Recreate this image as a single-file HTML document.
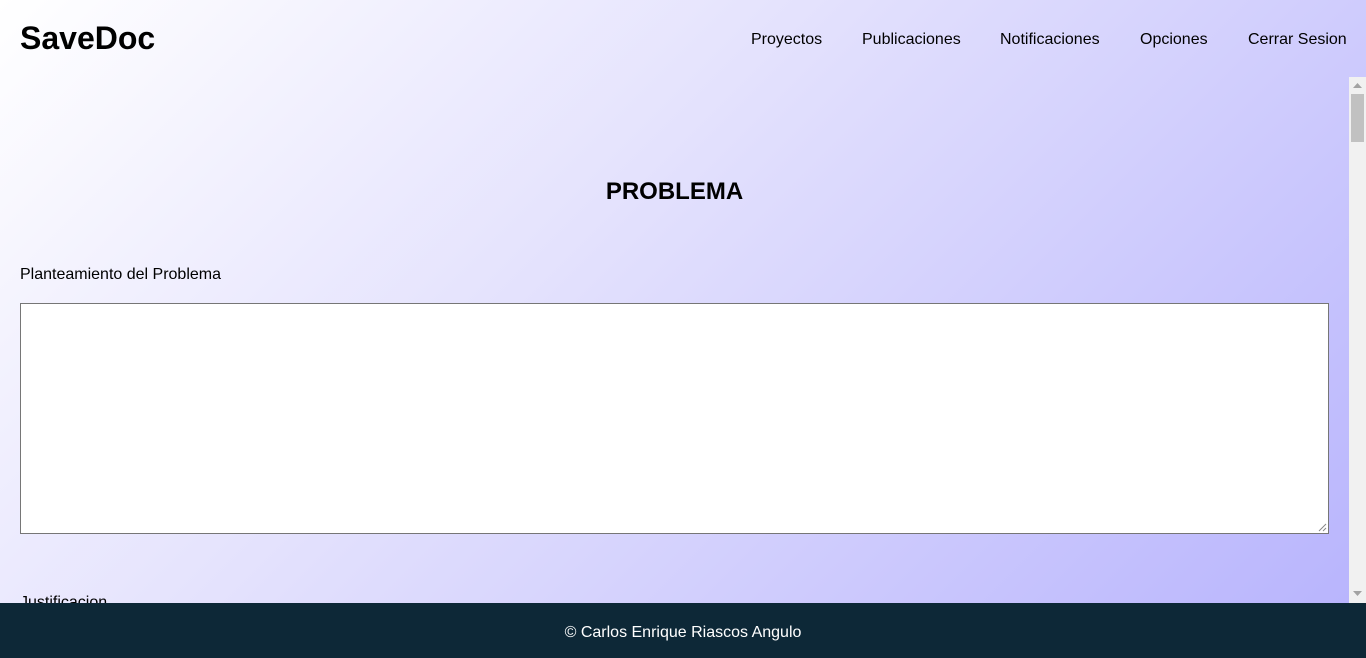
<!DOCTYPE html>
<html><head><meta charset="utf-8"><style>
*{margin:0;padding:0;box-sizing:border-box}
html,body{width:1366px;height:658px;overflow:hidden}
body{font-family:"Liberation Sans",Arial,sans-serif;background:linear-gradient(135deg,#ffffff 0%,#e4e2fd 40%,#b6b2fd 100%);position:relative;color:#000}
.logo{position:absolute;left:20px;top:20px;font-size:32px;font-weight:bold}
.nav{position:absolute;top:31px;font-size:16px}
h2{position:absolute;left:0;width:1349px;text-align:center;top:178px;font-size:24px;font-weight:bold}
.lbl{position:absolute;left:20px;font-size:16px}
.ta{position:absolute;left:20px;top:303px;width:1309px;height:231px;background:#fff;border:1px solid #767676}
.sb{position:absolute;left:1349px;top:77px;width:17px;height:526px;background:#f1f1f1}
.thumb{position:absolute;left:2px;top:17px;width:13px;height:48px;background:#c1c1c1}
.foot{position:absolute;left:0;top:603px;width:1366px;height:55px;background:#0d2837;color:#fff;text-align:center;line-height:59px;font-size:16px}
</style></head><body>
<div class="logo">SaveDoc</div>
<div class="nav" style="left:751px">Proyectos</div>
<div class="nav" style="left:862px">Publicaciones</div>
<div class="nav" style="left:1000px">Notificaciones</div>
<div class="nav" style="left:1140px">Opciones</div>
<div class="nav" style="left:1248px">Cerrar Sesion</div>
<h2>PROBLEMA</h2>
<div class="lbl" style="top:266px">Planteamiento del Problema</div>
<div class="ta"><svg style="position:absolute;right:1px;bottom:1px" width="10" height="10"><path d="M9 2L2 9M9 6L6 9" stroke="#888" stroke-width="1"/></svg></div>
<div class="lbl" style="top:594px">Justificacion</div>
<div class="sb"><svg style="position:absolute;left:4px;top:6px" width="9" height="6"><path d="M4.5 0L9 5H0Z" fill="#a3a3a3"/></svg><div class="thumb"></div><svg style="position:absolute;left:4px;bottom:6px" width="9" height="6"><path d="M0 0H9L4.5 5Z" fill="#a3a3a3"/></svg></div>
<div class="foot">© Carlos Enrique Riascos Angulo</div>
</body></html>
